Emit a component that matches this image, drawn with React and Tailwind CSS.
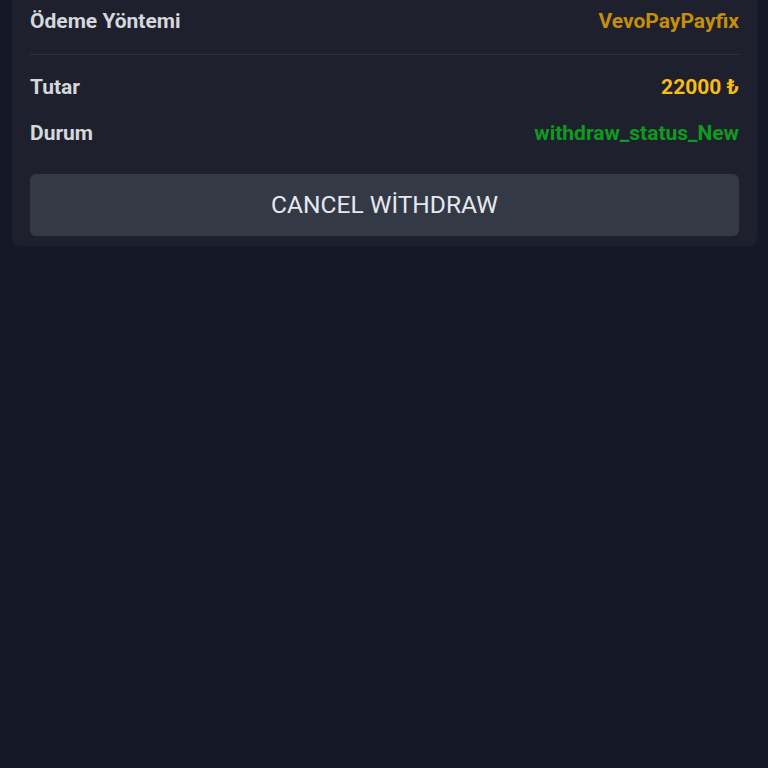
export default function App() {
  const rows = [
    { label: "Tutar", value: "22000 ₺", color: "text-[#f7bb1a]" },
    { label: "Durum", value: "withdraw_status_New", color: "text-[#0f9a1f]" },
  ];

  return (
    <div className="min-h-[768px] bg-[#151826] pl-3 pr-[11px] font-['Roboto',sans-serif]">
      <div className="rounded-b-lg bg-[#1e212d] px-[18px] pb-[10px]">
        {/* payment method */}
        <div className="flex h-[43px] items-center justify-between text-[21px] font-bold">
          <span className="text-[#d5d7dc]">Ödeme Yöntemi</span>
          <span className="text-[#c58f0c]">VevoPayPayfix</span>
        </div>
        <div className="mt-[11px] h-px bg-[#2f3341]" />

        <div className="mt-[19px] flex flex-col gap-[18px]">
          {rows.map((r) => (
            <div key={r.label} className="flex h-[28px] items-center justify-between text-[21px] font-bold">
              <span className="text-[#d5d7dc]">{r.label}</span>
              <span className={r.color}>{r.value}</span>
            </div>
          ))}
        </div>

        <button className="mt-[26px] flex h-[62px] w-full items-center justify-center rounded-md bg-[#343946] text-[24.5px] text-[#e6e8ee]">
          CANCEL WİTHDRAW
        </button>
      </div>
    </div>
  );
}
